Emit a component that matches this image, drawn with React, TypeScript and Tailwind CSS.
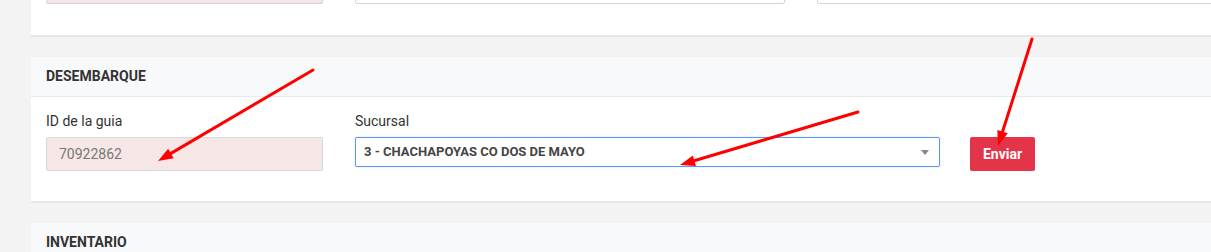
import React from "react";

type Pt = [number, number];

function Arrow({ from, to }: { from: Pt; to: Pt }) {
  const dx = to[0] - from[0];
  const dy = to[1] - from[1];
  const len = Math.hypot(dx, dy);
  const ux = dx / len;
  const uy = dy / len;
  const headLen = 15;
  const headW = 5.5;
  const bx = to[0] - ux * headLen;
  const by = to[1] - uy * headLen;
  const px = -uy;
  const py = ux;
  const pts = `${to[0]},${to[1]} ${bx + px * headW},${by + py * headW} ${bx - px * headW},${by - py * headW}`;
  return (
    <g>
      <line x1={from[0]} y1={from[1]} x2={bx + ux * 2} y2={by + uy * 2} stroke="#ff0000" strokeWidth={3} strokeLinecap="round" />
      <polygon points={pts} fill="#ff0000" />
    </g>
  );
}

export default function App() {
  return (
    <div
      className="relative h-[252px] w-[1211px] overflow-hidden bg-[#f3f3f3]"
      style={{ fontFamily: "Roboto, 'Liberation Sans', sans-serif" }}
    >
      <div className="ml-[31px] flex w-[1230px] flex-col">
        {/* top card (cut off) */}
        <div className="-mt-[29px] border-b-2 border-[#e6e6e6] bg-white px-[15px] pb-[31px]">
          <div className="flex">
            <div className="h-[33px] w-[277px] rounded-[2px] border border-[#cfd6de] bg-[#f6e6e6]" />
            <div className="ml-[32px] h-[33px] w-[430px] rounded-[2px] border border-[#cfd6de] bg-white" />
            <div className="ml-[32px] h-[33px] w-[420px] rounded-[2px] border border-[#cfd6de] bg-white" />
          </div>
        </div>

        {/* DESEMBARQUE card */}
        <div className="mt-[20px] border-b-2 border-[#e6e6e6] bg-white">
          <div className="flex h-[40px] items-center border-b border-[#e6eaef] bg-[#f8f9fb] px-[15px]">
            <span className="text-[14px] font-bold text-[#333]">DESEMBARQUE</span>
          </div>
          <div className="flex items-start px-[15px] pt-[14px] pb-[30px]">
            <div className="flex w-[277px] flex-col">
              <label className="h-[20px] text-[14px] leading-[20px] text-[#333]">ID de la guia</label>
              <div className="mt-[6px] flex h-[34px] items-center rounded-[2px] border border-[#d2d8de] bg-[#f6e6e6] px-[12px] text-[14px] text-[#777]">
                70922862
              </div>
            </div>
            <div className="ml-[32px] flex w-[585px] flex-col">
              <label className="h-[20px] text-[14px] leading-[20px] text-[#333]">Sucursal</label>
              <div className="mt-[6px] flex h-[30px] items-center justify-between rounded-[2px] border border-[#5897fb] bg-white pl-[8px] pr-[10px] shadow-[0_0_2px_rgba(0,0,0,0.15)]">
                <span className="text-[13px] font-bold text-[#444]">3 - CHACHAPOYAS CO DOS DE MAYO</span>
                <span className="h-0 w-0 border-x-[4px] border-t-[5px] border-x-transparent border-t-[#888]" />
              </div>
            </div>
            <button className="ml-[30px] mt-[26px] flex h-[34px] w-[65px] items-center justify-center rounded-[2px] bg-[#e3344a] text-[14px] font-bold text-white">
              Enviar
            </button>
          </div>
        </div>

        {/* INVENTARIO card */}
        <div className="mt-[20px] bg-white">
          <div className="flex h-[40px] items-center border-b border-[#e6eaef] bg-[#f8f9fb] px-[15px]">
            <span className="text-[14px] font-bold text-[#333]">INVENTARIO</span>
          </div>
        </div>
      </div>

      <svg className="pointer-events-none absolute left-0 top-0" width={1211} height={252}>
        <Arrow from={[313, 70]} to={[158, 161]} />
        <Arrow from={[858, 112]} to={[680, 165]} />
        <Arrow from={[1032, 39]} to={[998, 146]} />
      </svg>
    </div>
  );
}
